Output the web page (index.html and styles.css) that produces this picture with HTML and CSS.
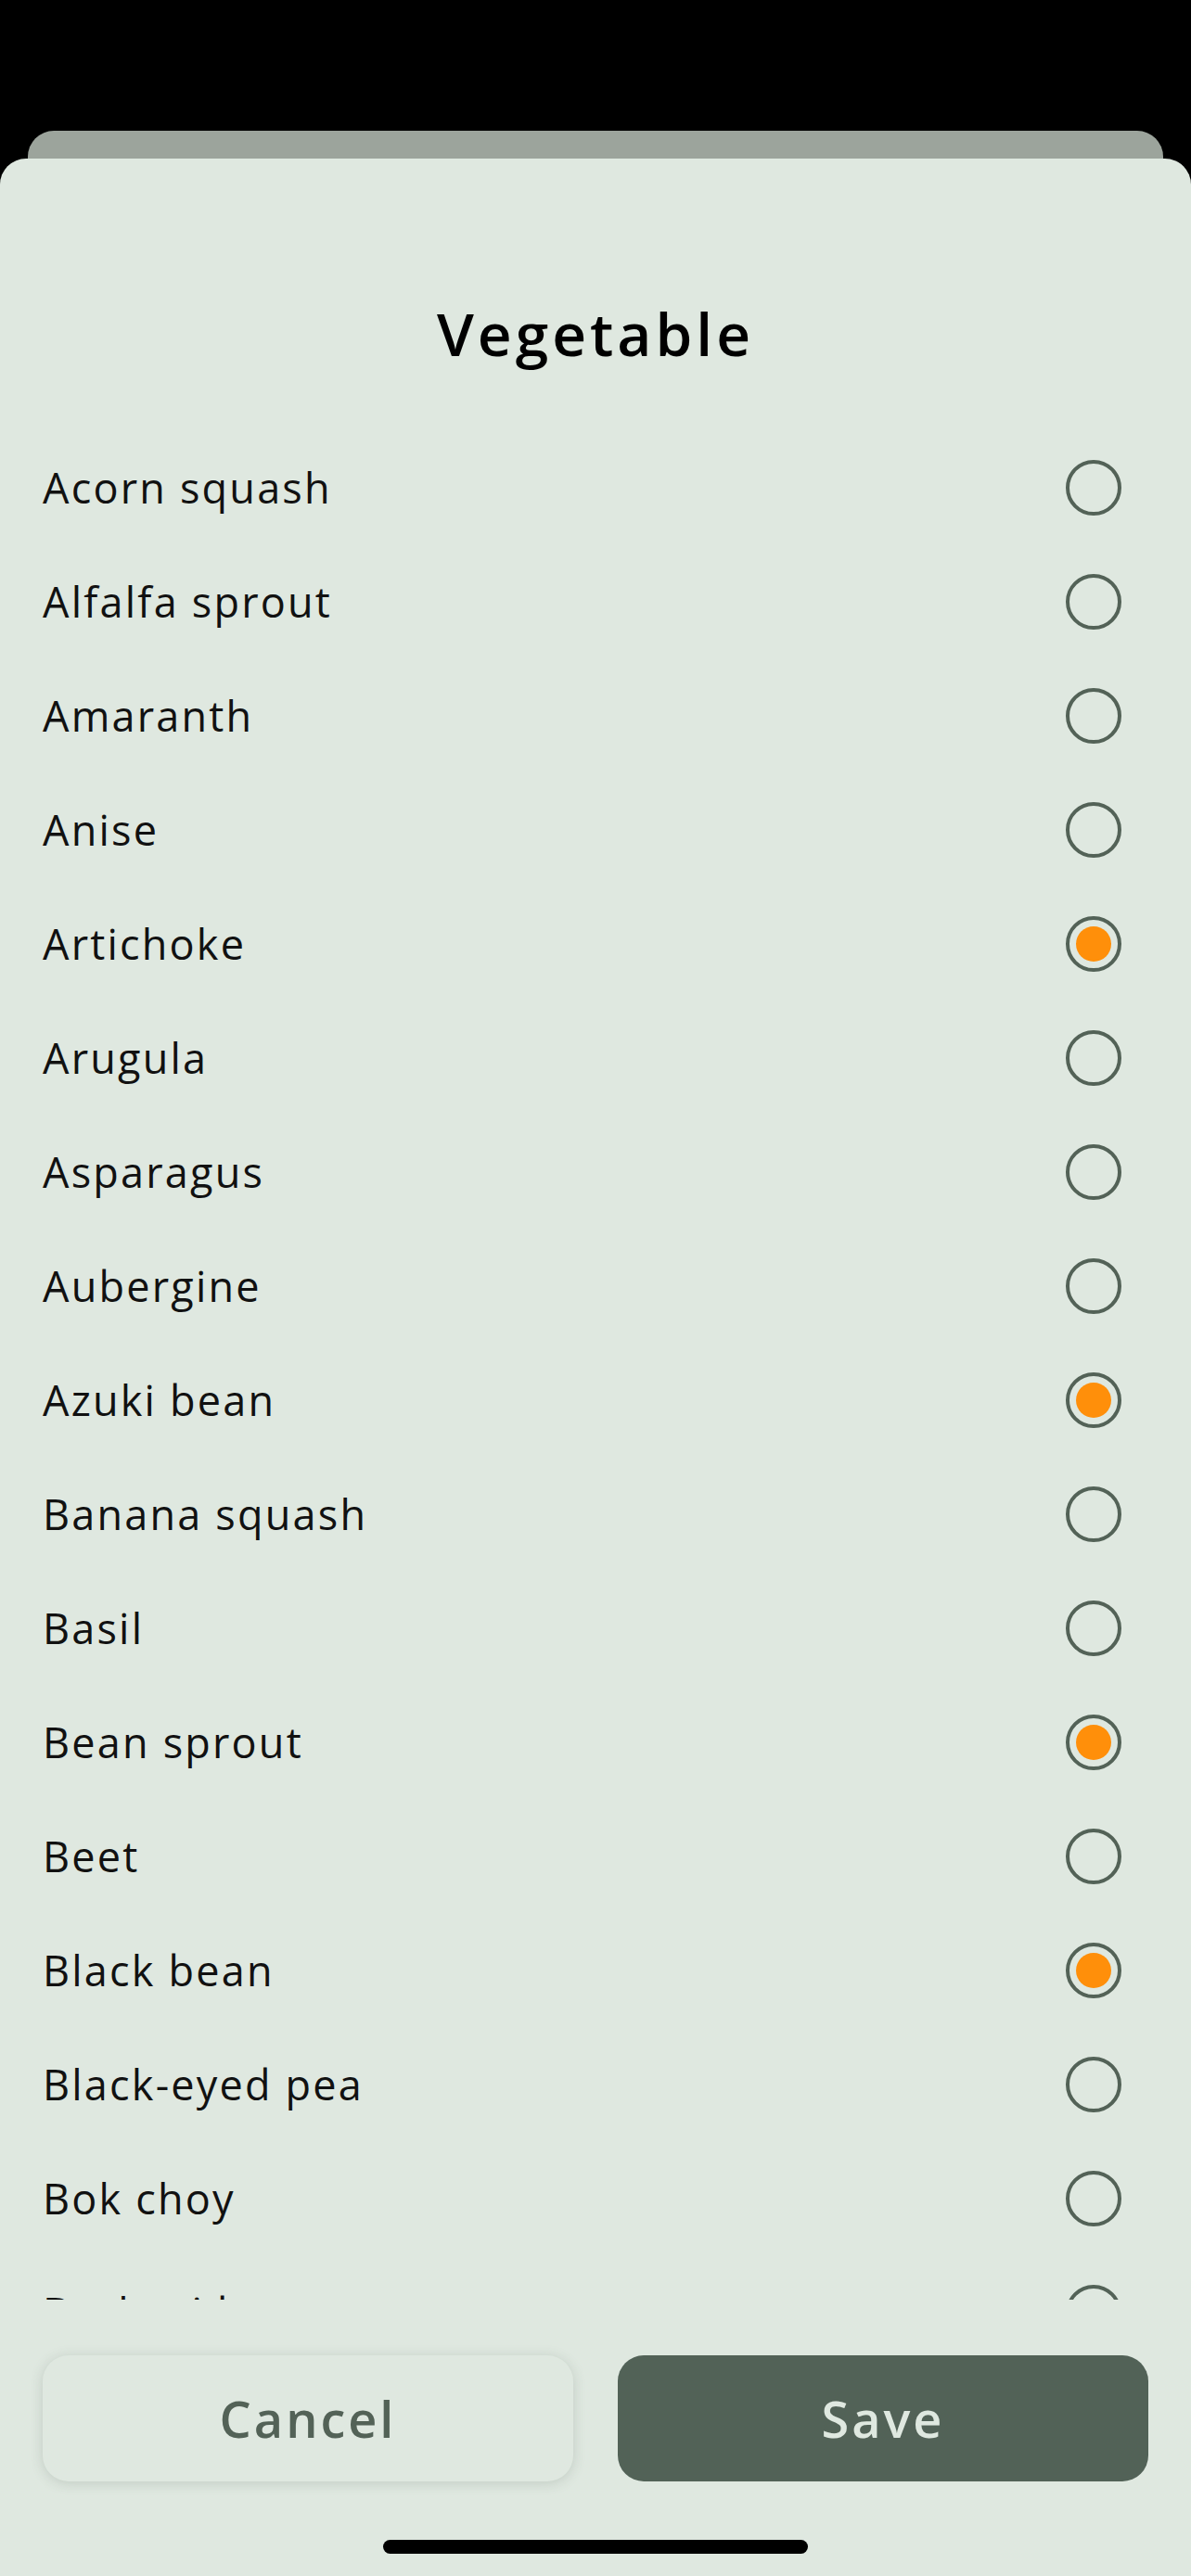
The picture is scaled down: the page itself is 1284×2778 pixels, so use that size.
FILE: index.html
```html
<!DOCTYPE html>
<html>
<head>
<meta charset="utf-8">
<link rel="stylesheet" href="styles.css">
</head>
<body>
<div class="screen">
  <div class="back-sheet"></div>
  <div class="sheet">
    <h1 class="title">Vegetable</h1>
    <ul class="list">
      <li class="row"><span class="label">Acorn squash</span><span class="radio"></span></li>
      <li class="row"><span class="label">Alfalfa sprout</span><span class="radio"></span></li>
      <li class="row"><span class="label">Amaranth</span><span class="radio"></span></li>
      <li class="row"><span class="label">Anise</span><span class="radio"></span></li>
      <li class="row"><span class="label">Artichoke</span><span class="radio checked"></span></li>
      <li class="row"><span class="label">Arugula</span><span class="radio"></span></li>
      <li class="row"><span class="label">Asparagus</span><span class="radio"></span></li>
      <li class="row"><span class="label">Aubergine</span><span class="radio"></span></li>
      <li class="row"><span class="label">Azuki bean</span><span class="radio checked"></span></li>
      <li class="row"><span class="label">Banana squash</span><span class="radio"></span></li>
      <li class="row"><span class="label">Basil</span><span class="radio"></span></li>
      <li class="row"><span class="label">Bean sprout</span><span class="radio checked"></span></li>
      <li class="row"><span class="label">Beet</span><span class="radio"></span></li>
      <li class="row"><span class="label">Black bean</span><span class="radio checked"></span></li>
      <li class="row"><span class="label">Black-eyed pea</span><span class="radio"></span></li>
      <li class="row"><span class="label">Bok choy</span><span class="radio"></span></li>
      <li class="row"><span class="label">Borlotti bean</span><span class="radio"></span></li>
    </ul>
    <div class="actions">
      <button class="btn btn-cancel">Cancel</button>
      <button class="btn btn-save">Save</button>
    </div>
    <div class="home-indicator"></div>
  </div>
</div>
</body>
</html>
```
FILE: styles.css
```css
* { box-sizing: border-box; }
html, body {
  margin: 0;
  padding: 0;
  background: #000;
}
body {
  width: 1284px;
  height: 2778px;
  overflow: hidden;
  font-family: "Open Sans", "Noto Sans", sans-serif;
}
.screen {
  width: 1284px;
  height: 2778px;
  padding-top: 141px;
  display: flex;
  flex-direction: column;
}
.back-sheet {
  margin: 0 30px;
  height: 60px;
  flex: none;
  background: #9ca49c;
  border-radius: 28px 28px 0 0;
}
.sheet {
  margin-top: -30px;
  flex: 1;
  background: #dfe8e0;
  border-radius: 28px 28px 0 0;
  display: flex;
  flex-direction: column;
  padding-top: 149px;
}
.title {
  margin: 0;
  height: 80px;
  line-height: 80px;
  text-align: center;
  font-size: 64px;
  font-weight: 600;
  color: #000;
  letter-spacing: 4px;
}
.list {
  list-style: none;
  margin: 64px 0 0;
  padding: 0;
  height: 2016px;
  overflow: hidden;
  flex: none;
}
.row {
  height: 123px;
  display: flex;
  align-items: center;
  justify-content: space-between;
  padding: 0 75px 0 46px;
}
.label {
  font-size: 45px;
  color: #111;
  letter-spacing: 2.2px;
}
.radio {
  width: 60px;
  height: 60px;
  border-radius: 50%;
  border: 4px solid #536257;
  display: flex;
  align-items: center;
  justify-content: center;
}
.radio.checked::after {
  content: "";
  width: 38px;
  height: 38px;
  border-radius: 50%;
  background: #ff8f0a;
}
.actions {
  display: flex;
  gap: 48px;
  padding: 0 46px;
  margin-top: 60px;
}
.btn {
  flex: 1;
  height: 136px;
  border: none;
  border-radius: 28px;
  font-family: "Open Sans", "Noto Sans", sans-serif;
  font-size: 54px;
  font-weight: 600;
  letter-spacing: 3px;
}
.btn-cancel {
  background: #dfe8e0;
  color: #536257;
  box-shadow: 0 2px 14px rgba(60, 80, 65, 0.18);
}
.btn-save {
  background: #526257;
  color: #dfe8e0;
}
.home-indicator {
  width: 458px;
  height: 15px;
  border-radius: 8px;
  background: #000;
  margin: 63px auto 0;
}
```
